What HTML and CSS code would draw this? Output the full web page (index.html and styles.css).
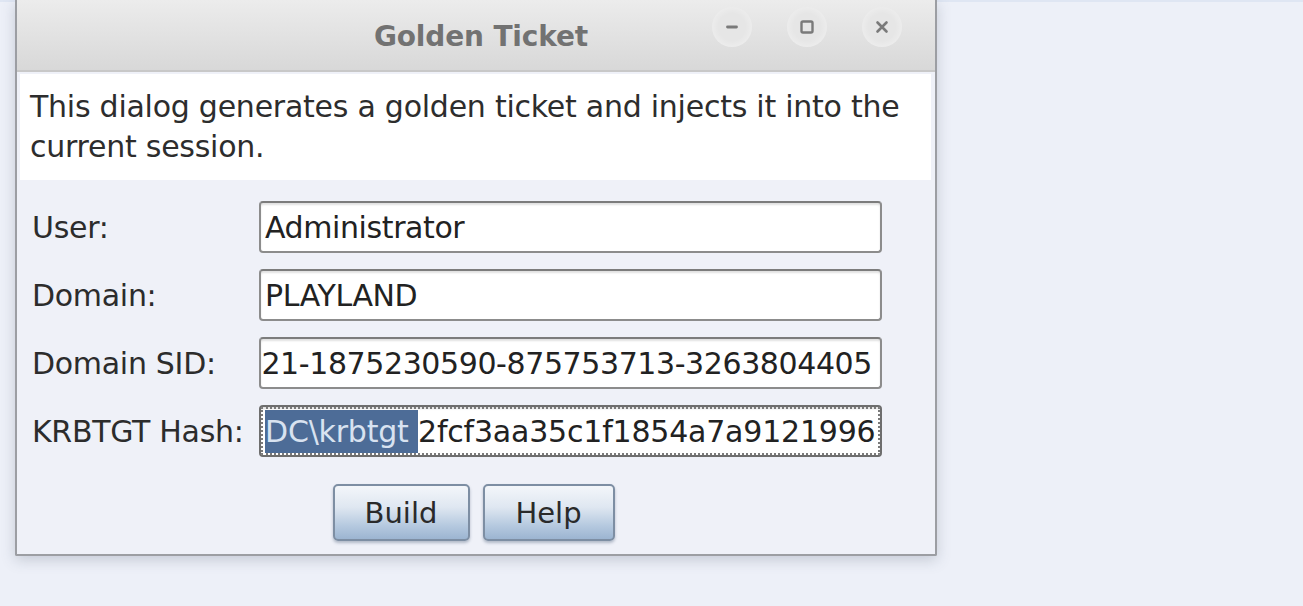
FILE: index.html
```html
<!DOCTYPE html>
<html>
<head>
<meta charset="utf-8">
<link rel="stylesheet" href="styles.css">
</head>
<body>
<div class="desk">
  <div class="window">
    <div class="titlebar">
      <div class="title">Golden Ticket</div>
      <div class="controls">
        <span class="ctl"><svg width="16" height="16" viewBox="0 0 16 16"><path d="M3.5 8h9" stroke="#7a7a7a" stroke-width="2.8" stroke-linecap="round"/></svg></span>
        <span class="ctl"><svg width="16" height="16" viewBox="0 0 16 16"><rect x="2.5" y="2.5" width="11" height="11" rx="1.5" fill="none" stroke="#7a7a7a" stroke-width="2.4"/></svg></span>
        <span class="ctl"><svg width="16" height="16" viewBox="0 0 16 16"><path d="M3.5 3.5l9 9M12.5 3.5l-9 9" stroke="#7a7a7a" stroke-width="2.6" stroke-linecap="round"/></svg></span>
      </div>
    </div>
    <div class="content">
      <div class="desc">This dialog generates a golden ticket and injects it into the current session.</div>
      <div class="form">
        <label class="lbl">User:</label>
        <div class="field"><span class="val">Administrator</span></div>
        <label class="lbl">Domain:</label>
        <div class="field"><span class="val">PLAYLAND</span></div>
        <label class="lbl">Domain SID:</label>
        <div class="field field-end"><span class="val">21-1875230590-875753713-3263804405</span></div>
        <label class="lbl">KRBTGT Hash:</label>
        <div class="field field-focus"><span class="val val-hash"><span class="sel">DC\krbtgt </span>2fcf3aa35c1f1854a7a9121996</span></div>
      </div>
      <div class="buttons">
        <button class="btn btn-build">Build</button>
        <button class="btn btn-help">Help</button>
      </div>
    </div>
  </div>
</div>
</body>
</html>
```
FILE: styles.css
```css
html, body {
  margin: 0;
  padding: 0;
  height: 100%;
}
body {
  background: #edf0f8;
  font-family: "DejaVu Sans", "Liberation Sans", sans-serif;
  overflow: hidden;
}
.desk {
  padding-left: 15px;
  border-top: 2px solid #dfe6f3;
  height: 100%;
  box-sizing: border-box;
}
.window {
  width: 922px;
  height: 556px;
  margin-top: -2px;
  box-sizing: border-box;
  border: 2px solid #9c9ea3;
  border-top: none;
  border-radius: 0 0 2px 2px;
  background: #eff1f8;
  box-shadow: 0 4px 14px rgba(80, 90, 110, 0.25);
  display: flex;
  flex-direction: column;
  overflow: hidden;
}
.titlebar {
  height: 72px;
  flex: none;
  position: relative;
  display: flex;
  align-items: center;
  justify-content: center;
  background: linear-gradient(#ececec, #d8d8d8);
  border-bottom: 2px solid #c8c8c8;
  box-sizing: border-box;
}
.title {
  font-weight: bold;
  font-size: 28px;
  color: #727272;
  margin-left: 10px;
  margin-top: 3px;
  letter-spacing: -0.15px;
}
.controls {
  position: absolute;
  right: 33px;
  top: 7px;
  display: flex;
  gap: 35px;
}
.ctl {
  width: 40px;
  height: 40px;
  border-radius: 50%;
  background: radial-gradient(circle, #e6e6e6 48%, #ececec 70%, rgba(236,236,236,0) 100%);
  display: flex;
  align-items: center;
  justify-content: center;
}
.content {
  flex: 1;
  display: flex;
  flex-direction: column;
  padding: 2px 4px 0 3px;
}
.desc {
  background: #ffffff;
  color: #2d2d2d;
  font-size: 30px;
  line-height: 40px;
  padding: 13px 10px 2px 10px;
  height: 106px;
  box-sizing: border-box;
  letter-spacing: -0.25px;
}
.form {
  display: grid;
  grid-template-columns: 227px 623px;
  grid-auto-rows: 52px;
  row-gap: 16px;
  margin: 21px 0 0 12px;
  align-items: center;
}
.lbl {
  font-size: 30px;
  color: #2c2c2c;
  letter-spacing: -0.3px;
  white-space: nowrap;
}
.field {
  height: 52px;
  box-sizing: border-box;
  background: #ffffff;
  border: 2px solid #8c8c8c;
  border-top-color: #7c7c7c;
  border-radius: 4px;
  box-shadow: inset 0 2px 2px rgba(0,0,0,0.12);
  display: flex;
  align-items: center;
  padding: 0 4px;
  overflow: hidden;
  white-space: nowrap;
}
.val {
  font-size: 30px;
  color: #222;
  letter-spacing: -0.4px;
}
.val-hash {
  letter-spacing: -0.2px;
}
.field-end {
  justify-content: flex-end;
  padding-right: 8px;
}
.field-focus {
  border-color: #6e6e6e;
  outline: 2px dotted #7a7a7a;
  outline-offset: -4px;
}
.sel {
  background: #4d6c97;
  color: #d8e2f0;
  padding: 4px 0;
}
.buttons {
  display: flex;
  justify-content: center;
  gap: 13px;
  margin-top: 27px;
  margin-left: -4px;
}
.btn {
  height: 57px;
  border: 2px solid #7d8ea3;
  border-radius: 5px;
  background: linear-gradient(#f3f6fa 0%, #dfe7f1 40%, #b5c9df 75%, #9cb5d1 100%);
  font-family: "DejaVu Sans", "Liberation Sans", sans-serif;
  font-size: 29px;
  color: #2a2a2a;
  box-shadow: 0 2px 3px rgba(60, 80, 110, 0.35);
  padding: 0;
}
.btn-build { width: 137px; }
.btn-help { width: 132px; }
```
